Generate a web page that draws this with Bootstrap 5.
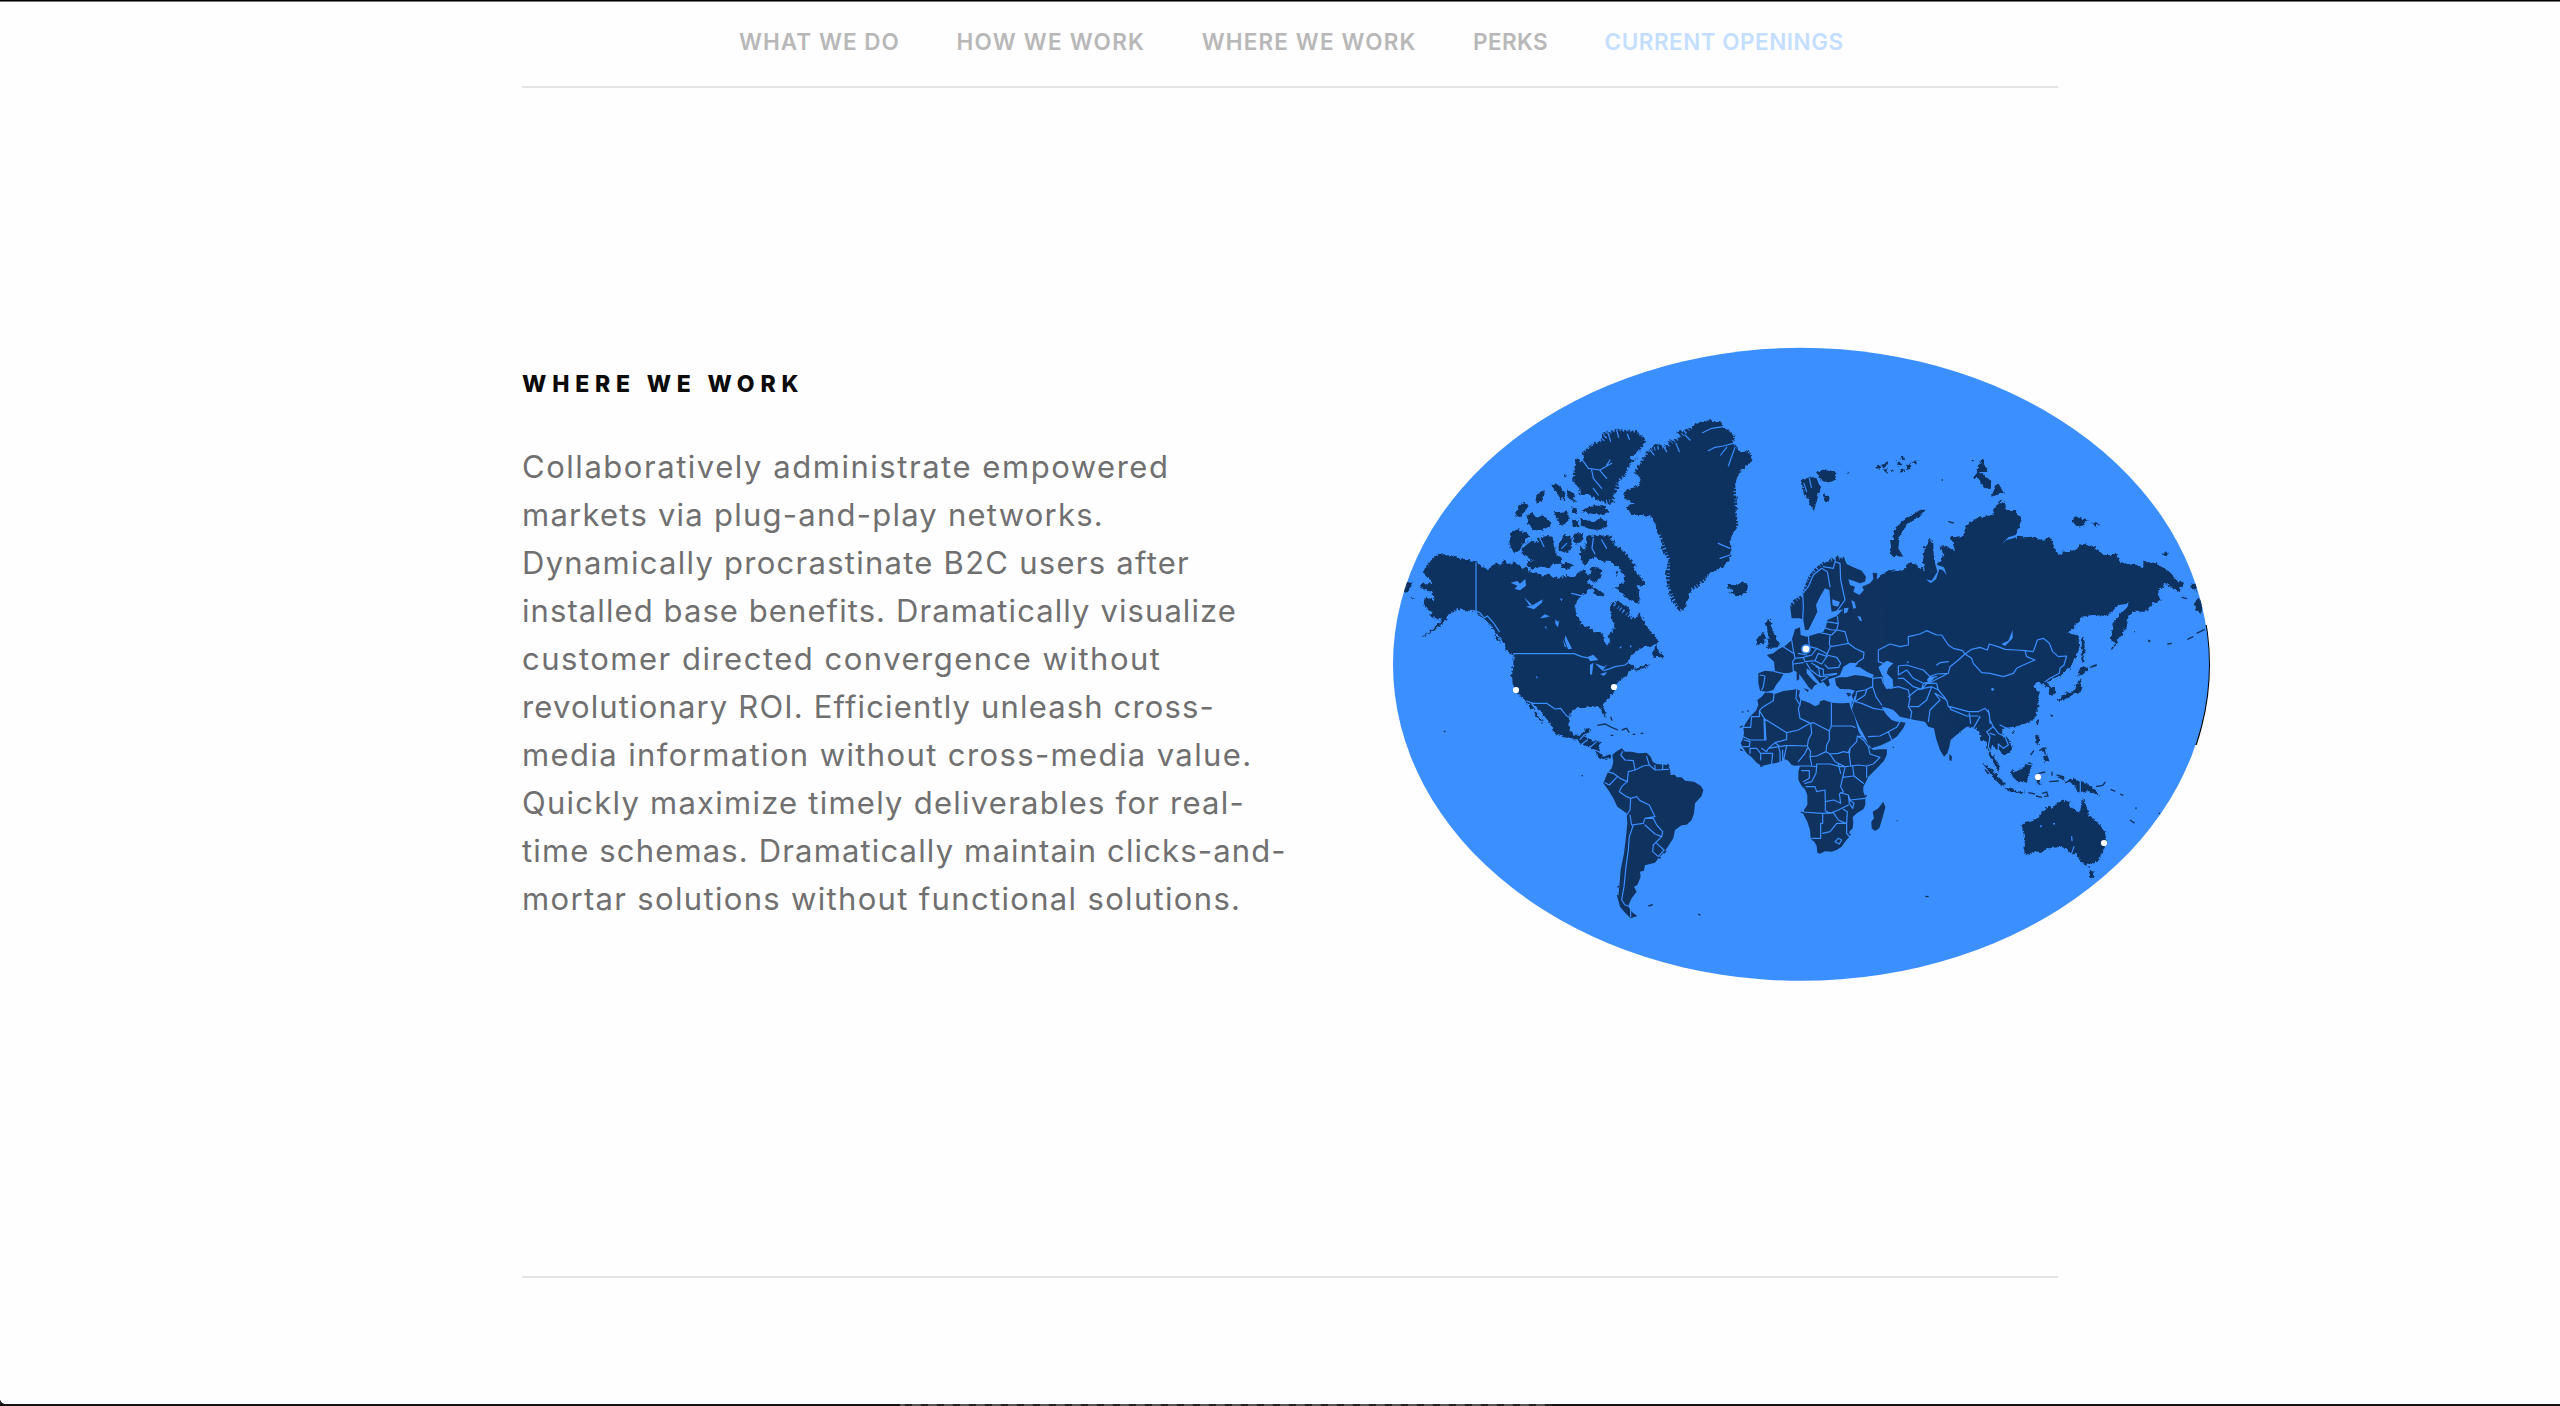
<!DOCTYPE html>
<html lang="en">
<head>
<meta charset="utf-8">
<title>Where we work</title>
<link href="https://cdn.jsdelivr.net/npm/bootstrap@5.3.0/dist/css/bootstrap.min.css" rel="stylesheet">
<style>
body{height:1406px;background:#fefefe;font-family:Inter,"Open Sans",sans-serif;overflow:hidden;border-top:1px solid #000;box-shadow:inset 0 1px #777}
.shell{width:1536px;margin-left:522px}
.topnav{height:87px;border-bottom:2px solid #e4e4e4}
.topnav .nav{padding:28px 0 0 217px;gap:56.5px}
.topnav .nav-link{padding:0;font-size:22.5px;line-height:26px;font-weight:600;color:#b8b8b8;white-space:nowrap}
.topnav .nav-link.active{color:#c4deff}
.n1{letter-spacing:1.05px}.n2{letter-spacing:1.25px}.n3{letter-spacing:1.15px}.n4{letter-spacing:.4px}.n5{letter-spacing:.5px}
.place{height:1190px;border-bottom:2px solid #e4e4e4}
.copy{width:871px;padding-top:282px}
.copy h2{font-size:23px;font-weight:800;line-height:28px;margin:0 0 44.5px;color:#0b0b0b;letter-spacing:5.8px}
.copy p{font-size:31px;line-height:48px;color:#707070;font-weight:400;margin:0}
.copy p span{display:block;width:max-content}
.copy p :nth-child(1){letter-spacing:1.538px}
.copy p :nth-child(2){letter-spacing:1.241px}
.copy p :nth-child(3){letter-spacing:1.262px}
.copy p :nth-child(4){letter-spacing:1.085px}
.copy p :nth-child(5){letter-spacing:1.5px}
.copy p :nth-child(6){letter-spacing:1.156px}
.copy p :nth-child(7){letter-spacing:1.381px}
.copy p :nth-child(8){letter-spacing:1.244px}
.copy p :nth-child(9){letter-spacing:1.15px}
.copy p :nth-child(10){letter-spacing:1.33px}
.globe{width:820px;height:640px;margin-top:256px}
.land path{fill:#10325f}
.sea path,.sea circle{fill:#3c8fff}
.edge path{fill:none;stroke:#3c8fff;stroke-width:3.6;stroke-linejoin:round;stroke-linecap:round}
.fray path{stroke:#3c8fff;stroke-width:11;stroke-dasharray:3 7 4 10 2 6}
.isle path{stroke:#10325f;stroke-width:4;fill:none}
.strip{height:2px;background:linear-gradient(90deg,#111 0 900px,transparent 900px 1552px,#111 1552px),repeating-linear-gradient(90deg,#555 0 9px,#222 9px 16px)}
.corner{width:5px;height:5px;background:radial-gradient(circle at 100% 0,transparent 4.5px,#222 5px)}
</style>
<script src="https://cdn.jsdelivr.net/npm/bootstrap@5.3.0/dist/js/bootstrap.bundle.min.js"></script>
</head>
<body class="d-flex flex-column">
<header class="shell topnav flex-shrink-0">
<nav class="nav flex-nowrap align-items-center">
<a class="nav-link n1" href="#">WHAT WE DO</a><a class="nav-link n2" href="#">HOW WE WORK</a><a class="nav-link n3" href="#">WHERE WE WORK</a><a class="nav-link n4" href="#">PERKS</a><a class="nav-link n5 active" href="#">CURRENT OPENINGS</a>
</nav>
</header>
<main class="shell place d-flex flex-shrink-0">
<section class="copy flex-shrink-0">
<h2>WHERE WE WORK</h2>
<p><span>Collaboratively administrate empowered</span><span>markets via plug-and-play networks.</span><span>Dynamically procrastinate B2C users after</span><span>installed base benefits. Dramatically visualize</span><span>customer directed convergence without</span><span>revolutionary ROI. Efficiently unleash cross-</span><span>media information without cross-media value.</span><span>Quickly maximize timely deliverables for real-</span><span>time schemas. Dramatically maintain clicks-and-</span><span>mortar solutions without functional solutions.</span></p>
</section>
<svg class="globe flex-shrink-0" viewBox="1393 344 820 640" role="img" aria-label="World map with office locations">
<defs>
<clipPath id="disc"><ellipse cx="1801" cy="664.3" rx="408" ry="316.5"/></clipPath>
<clipPath id="rim"><rect x="2180" y="625" width="33" height="120"/></clipPath>
<filter id="rough" x="-5%" y="-5%" width="110%" height="110%"><feTurbulence type="fractalNoise" baseFrequency=".09" numOctaves="3" seed="4"/><feDisplacementMap in="SourceGraphic" scale="15" xChannelSelector="R" yChannelSelector="G"/></filter>
</defs>
<ellipse cx="1802" cy="664.8" rx="408" ry="316.5" fill="#000" clip-path="url(#rim)"/>
<ellipse cx="1801" cy="664.3" rx="408" ry="316.5" fill="#3c8fff"/>
<g clip-path="url(#disc)">
<!-- North America -->
<g transform="translate(1380 400) scale(.33333)">
<g class="land" filter="url(#rough)">
<path d="M124 513L140 505 145 488 165 470 188 460 205 470 222 466 240 476 265 478 290 486 308 500 322 508 340 498 352 490 360 497 372 480 385 492 402 487 420 498 440 506 455 520 470 516 490 530 505 520 520 535 545 530 560 524 580 530 600 515 612 508 618 522 628 530 622 545 640 562 625 572 610 585 595 600 586 622 588 645 600 660 602 672 625 682 645 695 662 696 668 705 672 725 685 740 690 722 686 705 700 690 703 672 692 655 696 635 690 618 695 607 715 605 730 612 745 622 752 640 758 655 770 655 778 638 785 645 790 665 803 685 812 697 830 710 834 725 828 735 800 740 785 745 765 755 750 768 745 785 765 800 775 805 800 792 808 795 790 805 770 812 755 808 745 815 740 828 725 835 712 845 705 862 704 875 690 890 672 905 668 918 676 935 676 953 668 945 662 925 655 918 640 922 620 918 612 925 595 923 575 932 568 945 570 960 565 975 570 992 582 1004 600 1004 610 995 615 986 633 984 630 995 622 1005 612 1010 625 1016 640 1023 662 1025 658 1045 660 1060 672 1070 690 1063 697 1070 685 1074 670 1078 655 1070 648 1056 635 1045 615 1038 600 1030 590 1018 575 1018 550 1010 530 1002 517 990 514 975 498 955 480 932 462 912 452 908 460 925 475 945 490 970 482 963 468 948 460 930 448 918 438 902 420 888 408 870 398 852 396 825 400 800 400 780 402 765 385 755 375 738 365 720 350 700 335 680 322 665 305 650 288 634 265 632 245 630 235 624 225 632 210 640 200 655 185 675 165 690 150 698 122 714 162 684 180 668 185 655 165 655 150 648 155 635 135 622 130 605 138 590 160 598 158 575 140 572 118 562 125 552 155 548 150 540 138 525Z"/>
<path d="M70 575L80 545 98 550 90 563 78 578ZM88 588l18 6-6 4zM48 732l14 2zM105 715l20-6zM340 700l14 12 10 16-14-10zM372 738l20 14 12 16-18-8z"/>
<path d="M828 735L834 752 852 768 850 778 838 772 820 770 815 762Z"/>
<path d="M388 445L392 395 415 388 440 398 448 412 430 428 420 450 405 460ZM422 458L430 440 450 420 478 430 470 415 500 408 518 410 522 440 530 465 548 478 540 495 520 490 505 508 480 500 455 508 440 495 442 480 462 482 430 465Z"/>
<path d="M406 348L415 320 432 308 446 318 430 340 418 350ZM440 348l18-12 14 18 18-8 24 22-6 14-30 10-18-2-16-18zM465 295l14-18 12-6-2 28-18 10zM514 255l12-6 16 12 12 18 2 20-12 2-14-22zM550 222l10 4-4 10zM560 268l18 10 10 28-14-2-10-14zM520 335l14 22 6 18 14-2 14-20-8-22-18 8zM575 322l18 4-2 16-16-4zM578 358l14 2 4 20-14 4-8-12zM600 355l14 4 24 6 24-10 22 8-2 20-24 6-30-2-22-10zM604 332l22-10 30-8 18 4 14 18-28 8-34-4z"/>
<path d="M536 432l18-28 20 4 2 30-14 22-22-8zM580 402l30-4-4 22-14 16-10-10zM540 490l24-2 14 8-8 12-24-6z"/>
<path d="M620 405L648 408 690 405 704 432 730 448 752 478 768 495 760 505 795 545 790 558 770 555 778 580 778 610 760 605 735 590 715 570 700 565 735 548 728 520 712 498 690 485 665 485 640 470 625 482 615 455 618 425ZM650 498L668 510 662 535 640 548 628 532 632 508ZM600 435l20 28 5 24-12 12-12-24zM640 560l34 22-10 10-24-12zM706 512l12 8-8 8z"/>
<path d="M590 172L605 190 612 168 605 158 640 128 668 120 665 102 690 96 710 86 735 90 765 92 790 108 800 128 780 150 745 180 770 175 745 200 738 225 715 245 718 265 700 288 708 302 685 315 655 300 630 285 600 285 598 265 578 245 580 215Z"/>
</g>
<g class="fray">
<path fill="none" d="M590 172L605 158 640 128 668 120 690 96 710 86 735 90 765 92 790 108 800 128 780 150 738 225 715 245 700 300 655 312M580 215L580 250 600 285M690 405L704 432 730 448 768 495 795 545M545 530L600 515M695 607L758 655"/>
</g>
<g class="sea">
<path d="M392 548l20-5 8 8 16-14 2 20-18 14-16-4 8-10zM438 620l22-6 28-16-2 10-24 20zM432 592l24 22-8 2zM480 655l14-12 16 6-16 4zM526 658l8 8 4-6-4 22-8-10zM494 682l4-4 2 10zM540 594l8 4-4 6zM556 706l20 40-12 2-10-28zM548 718l12 24-6-2zM624 770L640 764 655 780 630 784ZM630 795L640 788 636 825 630 822ZM645 790L672 800 682 792 668 812 655 800ZM660 822l22-6-10 12zM718 742l8-4-4 8zM750 735l6 4-6 4zM468 828l6 4-4 4zM800 755L825 742 815 762 820 774 775 788 768 772Z"/>
</g>
<g class="edge">
<path d="M288 488V632L302 640 312 654 322 648 340 668 358 695M402 761H582L605 770 630 775M672 812L690 806 705 800 735 795 755 780 762 788 765 805M440 903L460 910H500L525 927 542 925 560 948 570 952M575 580L615 590M600 1018L612 1005 625 1000M606 1032L622 1020M630 1042L650 1025M645 1050L662 1058M695 1060V1075M606 178L625 205 660 210 695 190M635 210L640 235 665 265M660 212L680 235M680 196L690 180M595 318L640 312M430 440L455 420M478 412L492 440M545 445L560 430M620 400H680M742 102L748 118M710 90L716 112M685 102L692 124M640 415L636 445 645 462M665 420L680 445M640 265L655 285"/>
</g>
<g class="isle">
<path d="M652 976L675 972 695 982 714 990M725 990L740 985 748 998M782 1000h8M692 1006h8M758 1003h8M692 950l4 12M192 992l4 4M605 1126l3 3"/>
</g>
</g>
<!-- Greenland, Iceland, Svalbard, Franz Josef Land, Britain -->
<g transform="translate(1600 400) scale(.33333)">
<g class="land" filter="url(#rough)">
<path d="M102 215L125 180 145 150 165 132 200 138 210 122 240 110 232 98 275 80 290 68 330 60 365 68 370 82 385 90 405 112 400 130 425 160 440 152 458 168 450 190 425 212 410 235 405 270 412 305 410 340 415 375 395 405 390 430 392 475 365 505 325 520 315 545 275 570 260 600 252 635 232 625 212 598 203 560 195 520 205 480 182 445 178 405 165 370 155 350 130 345 95 345 80 320 105 312 70 290 75 275 115 255 122 235Z"/>
<path d="M380 560l10-12 10 8 30-10 14 14-4 16-26 14-26-12 8-8zM604 238l10-4 14 2 10-8 12 14 14 20-8 20-14 50-12-18-6-20-12-10zM650 218l20-10 36 10 2 22-24 8-30-16zM668 280l16 8 4 20-14-2zM740 214l8 4-6 4zM828 200l12-4 2 8-8 2zM846 192l16-6 2 10-10 6zM848 210l12-4v12zM872 212l8-4 2 8z"/>
<path d="M494 670L508 656 515 672 510 680 522 700 530 722 540 735 535 742 500 745 508 732 502 715 510 710 505 695ZM472 710l16-14 8 12-4 22-20 4z"/>
</g>
<g class="fray"><path fill="none" d="M102 215L145 150 200 138 240 110 275 80M405 112L400 130 440 152M425 212L405 270 415 375 392 475M178 405L205 480 203 560 232 625M365 505L275 570"/></g>
<g class="edge"><path stroke-width="6" d="M325 152L345 142 370 138 400 130M362 165L380 142M385 198L405 142M308 98L335 85 370 80M238 155L228 130M200 155L185 130M270 120L255 105M162 165L150 150M355 430L390 445M360 475L390 465M188 480H205M628 234L634 262M612 250L620 275"/></g>
</g>
<!-- Europe, western Asia, India -->
<g transform="translate(1740 540) scale(.33333)">
<g class="land">
<path d="M150 195L160 180 185 165 192 145 205 110 225 85 250 65 262 66 275 52 282 60 292 46 300 54 312 50 315 60 320 72 340 82 365 92 378 110 375 125 360 130 340 122 325 118 330 135 345 140 340 155 358 165 372 150 366 140 390 130 400 118 398 98 412 100 410 118 440 98 448 104 465 95 485 92 500 85 500 72 530 80 560 100 575 90 720 90 720 520 700 545 680 560 655 580 632 600 628 620 622 640 612 650 600 630 588 595 582 565 565 560 555 545 525 540 500 535 480 530 470 520 460 510 445 505 425 500 430 510 440 525 455 540 470 545 480 545 497 548 490 565 470 590 450 603 425 615 395 625 385 612 375 590 358 560 345 530 335 505 335 488 340 480 335 465 345 452 330 448 300 447 288 435 285 415 300 412 320 412 345 405 370 408 395 415 402 405 380 395 360 382 345 380 355 370 330 368 310 380 300 405 285 412 265 418 270 435 262 440 250 425 240 430 225 412 210 392 200 385 200 400 218 420 232 432 222 438 215 450 205 440 195 425 180 405 165 392 150 398 132 400 120 420 108 435 100 450 80 455 60 452 55 430 55 400 75 392 105 395 102 365 80 345 100 340 115 328 135 318 155 300 160 285 165 268 180 262 182 285 200 290 235 280 250 275 258 260 262 240 290 228 310 208 300 210 275 215 272 195 270 170 268 150 255 145 240 170 228 195 232 215 220 240 205 270 195 270 190 240 180 235 155 235Z"/>
<path d="M170 398l6-10 2 30-8 4zM190 445l16 4-2 8zM262 458l24 4zM320 462l14 2-8 6zM628 642l8 8-2 14-6-4zM450 0L455 30 472 48 490 50 475 25 478 0Z"/>
</g>
<g class="fray"><path fill="none" stroke-width="6" d="M150 195L185 165 205 110 250 65 312 50"/></g>
</g>
<!-- Africa -->
<g transform="translate(1720 640) scale(.33333)">
<g class="land"><path d="M135 158L150 158 165 162 190 153 215 150 230 148 240 152 236 168 242 180 255 184 270 190 285 199 298 193 300 184 312 180 335 188 355 190 372 190 388 188 392 205 402 225 408 245 412 262 416 275 425 290 440 305 447 315 448 322 460 330 480 328 501 328 500 345 492 362 475 380 460 395 445 410 438 425 430 440 430 455 436 470 436 495 430 508 410 520 398 532 400 548 398 565 388 575 388 590 375 605 365 620 350 630 335 635 315 634 300 641 292 638 290 618 283 605 272 595 270 570 262 545 250 522 252 510 262 495 262 465 255 448 245 438 235 420 235 395 240 378 230 378 215 375 205 362 195 358 180 365 165 370 150 372 125 378 110 368 95 352 80 340 68 322 62 310 68 298 72 280 70 262 80 245 92 228 108 212 115 195 112 180 125 170ZM490 485L496 502 490 525 478 565 465 573 455 565 454 545 462 535 458 515 475 505Z"/></g>
<g class="edge"><path d="M162 162L160 182 130 200 118 212V230H95L92 262H68M118 212L134 237 200 278 235 270 270 250 272 250 240 235 235 205 240 195 228 175 230 150M240 195L242 180M134 237L138 300H90L70 290M132 237L134 300M200 278L200 298 165 308 145 325 140 335M272 250L280 248 328 273 334 258V190M334 258H395L405 262M328 273V300L320 315 318 335 330 342 355 340 370 335 385 338 390 325 410 305 412 288 425 290M272 250L275 280 265 300 262 318 200 316 195 340 190 365M262 318L272 335 270 350 290 348 318 335M270 350L275 375M230 378H270L290 380 290 372 330 372 360 380 375 380M262 325L255 340 235 365M330 342L345 365 375 380 392 378 388 345 390 325M412 288L430 300 445 320 450 342 480 352 460 372 440 378 415 375 392 378M440 378V412M398 378L402 408 430 430M375 382L368 412 400 408M368 412L362 440 370 455 358 462 362 490 342 480 316 485 315 450 290 455 285 440 258 440M290 380L288 400 275 425 255 430M245 392H268L268 415 250 425M362 458L385 465 390 480 435 475M316 485V512L330 520 355 510 385 495M250 516L305 520 340 518M308 522V550H302V595H275M308 580L330 575 350 550 380 550 382 515 370 508M340 518L355 540 378 550M380 550V580L388 590M345 605L355 595 365 600 358 612 345 605M385 465L388 490 398 505 402 490 388 480M72 300L90 305 88 320 70 320M90 325L110 325 122 340 122 360M90 325V340M140 335L125 325M122 340L158 340 155 370M145 325L175 320 180 335 180 365M188 330L188 365M165 308L180 320 200 316M355 372L362 400"/></g>
<g class="isle"><path d="M60 262l8-4M60 328l8 4M242 516l10 4M436 470l4-4M275 598l6 2M388 586l4-4M120 378h8M66 215l4 2M82 212l4 2M380 160l12 2M518 322h4"/></g>
</g>
<!-- Siberia, China, Korea, Japan -->
<g transform="translate(1880 430) scale(.33333)">
<g class="land" filter="url(#rough)">
<path d="M0 435L30 420 70 425 85 398 110 405 135 425 128 395 135 350 150 330 160 340 162 400 175 400 190 375 180 345 200 352 225 360 212 322 250 318 255 290 290 265 335 255 350 225 370 215 380 240 405 240 425 265 415 300 405 320 430 322 460 320 490 332 510 322 520 345 537 378 550 365 590 360 600 340 640 350 655 360 670 375 710 375 722 400 770 405 790 412 790 395 830 400 865 425 890 450 912 460 895 485 870 470 855 460 835 485 845 512 820 520 795 545 760 545 745 560 740 590 715 630 703 650 695 620 698 580 720 555 740 530 750 515 735 522 715 525 700 540 680 558 640 555 605 560 585 590 565 608 595 620 600 645 590 680 570 710 545 735 520 745 500 760 515 775 525 770 525 792 508 795 505 775 490 765 480 755 455 768 480 785 475 800 475 830 460 860 440 878 405 890 370 892 250 880 150 840 100 800 60 740 20 660Z"/>
<path d="M28 370L35 340 45 300 65 270 95 255 125 235 136 240 128 252 95 272 75 290 55 325 48 355 60 378 40 378ZM290 125l12-32 8-6 10 30 2 10-14 6 26 20-2 24-20-4-14-22-16-12zM335 200l10-32 10-8 16 28zM575 275l10-18 14 8 24 6-10 14-20 6zM636 276l26 8-16 6zM596 316l20 8zM842 372l12-8 12 4-14 10zM930 468l14-8 6 24zM942 520l14-14 12 20-4 24-14-10zM606 622l6 0 2 30 6 18-10 4v22l-6 0zM596 722l10-16 20 12-16 14-14 6zM600 745l6 20-6 22-20 8-14 8-32 12 14-20 30-12zM530 805l10 2-4 14zM468 878l6-12 2 6-6 14zM5 110l15-5-6 12zM48 96l10-4 6 10-8 8zM62 80l10-2 2 10-8 2zM58 118l12-2 2 10-10 2zM78 105l14-4 2 12-12 4zM98 98l14-8-4 16zM68 62l5 6zM200 102h8z"/>
</g>
<g class="sea"><path d="M138 448L155 452 172 425 165 400 162 340 170 350 172 405 192 412 200 435 188 420 178 418 168 448 152 460ZM366 342L385 322 425 310 400 325 380 330ZM364 642L385 632 398 600 398 625 375 648ZM334 775l8 4-6 2z"/></g>
<g class="edge"><path d="M255 672L275 658 300 652 322 660 328 642 360 652 375 658 410 660 435 662 460 665 472 630 490 625 508 640 518 665 535 680 560 678 552 705 540 715 538 730 510 745 495 755M435 662L440 680 465 690 430 705 410 715 400 730 370 740 330 730 305 728 280 700 275 685 255 672M300 128H325"/></g>
<g class="isle"><path d="M150 325l-5 8M275 92l6 0M355 218l10-8M205 275l16 4M185 150h4M630 712l20-6M805 630l6 4M862 642l14-2M922 628l18-8M950 610l24-12M762 605h3M905 502l16 4M696 655l4-4M512 858l4-4"/></g>
</g>
<!-- South-east Asia, Australia -->
<g transform="translate(1890 620) scale(.33333)">
<g class="land" filter="url(#rough)">
<path d="M230 240L440 250 440 290 420 305 375 320 355 325 345 320 335 335 350 355 365 375 360 395 340 408 330 395 318 385 305 375 303 395 312 410 325 430 330 455 318 445 308 420 298 405 292 380 290 360 275 360 268 335 258 325 240 320 225 320 180 360Z"/>
<path d="M276 428L292 436 310 455 330 475 346 490 342 500 328 492 310 472 295 452ZM344 503L365 508 390 515 410 520 380 518 350 512ZM362 450L380 452 400 440 415 425 428 432 420 450 418 470 408 488 380 482 368 470ZM436 470l8-12 4 20 8 20-14-10-4 10zM362 338l12-6-4 10zM436 348l8-4 6 20-4 12-10-10zM460 415l12-12 6 20-14 2zM448 385l20-4-6 14zM525 470l-20 0 15 15 32 7 15 28 22-6 14 0 28 18-18-26-22-16-36-14-20 4-16 5z"/>
<path d="M395 615L410 605 445 595 455 575 475 560 490 565 500 548 520 542 542 545 540 560 568 578 575 560 578 535 588 555 600 590 625 608 645 635 650 665 635 700 625 725 605 728 590 734 570 725 560 700 548 705 540 700 530 685 510 680 480 685 455 695 430 695 412 704 403 698 405 670ZM596 752L615 755 610 770 602 775Z"/>
</g>
<g class="edge"><path d="M571 478V520M370 455L395 445 405 430 425 435M295 270L300 300 310 320 290 335 300 350 295 380 305 400M310 320L325 340 345 350 355 375 340 385 325 372 325 400M315 345L300 340M330 315L350 325 370 322M180 260L235 275 265 275 285 265 298 280 300 310M180 260L182 268 230 288 265 288M270 290L250 325M238 280L242 310M545 650L546 662M552 680L542 708"/></g>
<g class="sea"><circle cx="492" cy="611" r="3"/><circle cx="453" cy="619" r="3"/><circle cx="308" cy="208" r="4"/></g>
<g class="isle"><path d="M415 518l20 4M438 528l18 4M456 520l14-4 4 12-12 2M446 460l20-4M478 485l28-2M486 455v12M500 465l22 6M448 392l14-8 4 20M422 405l10-14M618 500l20-4 8-10M662 508l14 6M690 522l10 4M720 600l14 10M738 562v6M806 580h4M106 829l10 1M285 448l10 14M20 602h3M664 88l4-3M775 62l5 3M605 140l15-6M485 288h4M442 315l3-16M596 740l4 2"/></g>
</g>
<!-- Lakes and borders of Europe and Asia -->
<g transform="translate(1740 540) scale(.33333)">
<g class="sea">
<path d="M415 382L440 362 460 370 445 385 440 400 458 418 460 442 440 448 432 435 428 410ZM312 205l14-2-4 14-10 4zM334 180l10 6 4 18-8 2zM352 228l10 2 4 14-6-2zM276 178l24 8-6 14-16-4zM498 366l8-2v6zM572 408l12 6-16 14-8-8z"/>
</g>
<g class="edge">
<path d="M188 240L190 200 188 160 205 140 220 105 245 85 262 95 270 140M250 80L280 85 285 65 300 70 302 120 315 180 290 215M292 230L295 250 290 270M258 245L292 250M250 262L275 270 290 270 315 275 325 310M240 278L275 285 290 270M270 285L268 312 272 320 300 315 325 310M205 285L208 320 230 325 250 335 262 342M272 318L260 345 290 352 302 370 296 382M325 310L345 325 372 338 370 355 350 368M155 300L160 330 165 355 158 365 160 395M130 320L160 340M165 355L190 352 215 345 230 325M190 352L195 365 225 362 235 340 262 350M160 372L190 368M225 362L245 372 260 350M200 370L212 390 225 400 240 410 235 380 215 370M228 380L250 388 250 405 290 400M255 375L265 385 296 382M240 410L265 408 290 402M245 422L262 412M60 405L75 408 70 440 65 450M105 395L135 402M175 340L200 345M398 412L398 440 375 450 350 455M400 415L425 412M425 412L430 430M345 485L375 465 380 450M350 455L345 485 365 490 400 505 430 510M398 440L408 470 425 495M385 590L420 588 445 575 470 562 480 545M445 575L455 600M345 470L335 505M415 345L415 330 450 312 480 320 505 315 505 290 540 282 560 272 590 285 605 285 625 315 640 325 668 332 675 342 655 360 630 380 625 400 590 402 570 410 550 390 500 375 475 378V405L500 390 520 415 550 430 545 448 520 440 490 415 475 415M415 345L415 365 430 370M450 445L475 440 505 450 510 475 505 500 515 515 512 535M505 470L530 450 550 445 575 440 560 480 535 500 510 500M545 448L560 430 590 430 595 450 575 440M565 545L570 510 600 480 585 460 620 480 625 500 632 502M550 430L575 425 625 400M565 415L590 410M595 450L612 470 620 482M590 375L600 368 625 365"/>
</g>
</g>
<!-- South America -->
<g transform="translate(1380 640) scale(.33333)">
<g class="land"><path d="M697 345L708 335 725 325 735 335 755 335 775 340 800 338 812 350 818 365 830 372 862 375 870 388 872 405 885 404 890 412 905 412 915 422 942 425 962 437 970 450 965 468 945 490 942 520 935 540 920 554 905 556 885 570 880 595 865 618 850 640 835 655 825 668 795 676 792 692 780 695 782 710 772 735 762 740 770 755 755 775 748 790 745 800 758 818 772 828 752 835 735 818 720 800 714 775 718 740 722 690 732 640 738 590 742 550 740 520 712 500 700 475 685 450 670 430 682 400 695 385 700 365Z"/></g>
<g class="edge"><path d="M728 335L722 345 735 360 760 362 765 390 745 395 742 425 720 415 700 400 682 395M765 390L790 378 808 375 800 350M808 375L825 390 865 388M825 375V388M848 372V388M710 412L688 435 675 428M742 425L725 440 718 455 740 470 752 475 750 510 740 525M752 475L770 470 780 482 808 495 825 530 795 535 790 550 755 555 750 525M795 535L820 535 830 555 848 575 845 590 825 582 795 555M845 590L820 615 818 635 835 650 852 630 830 610M760 555L748 590 745 630 738 680 732 740 725 780 735 795 752 800V830"/></g>
<g class="isle"><path d="M805 798l14-4M955 822l6 4M712 742l6-4M712 765l8 24 10 14M684 348l8 6M655 350l8 6M862 372l6 8M852 640l6-8M834 652l8 2"/></g>
</g>
</g>
<!-- office pins -->
<g fill="#fff"><circle cx="1516" cy="690" r="3.1"/><circle cx="1614" cy="687" r="3.1"/><circle cx="1806" cy="649" r="4.8" fill="#3c8fff"/><circle cx="1806" cy="649" r="3.3"/><circle cx="2038" cy="777" r="3.1"/><circle cx="2104" cy="843" r="3.1"/></g>
</svg>
</main>
<div class="corner mt-auto flex-shrink-0"></div>
<div class="strip flex-shrink-0"></div>
</body>
</html>
